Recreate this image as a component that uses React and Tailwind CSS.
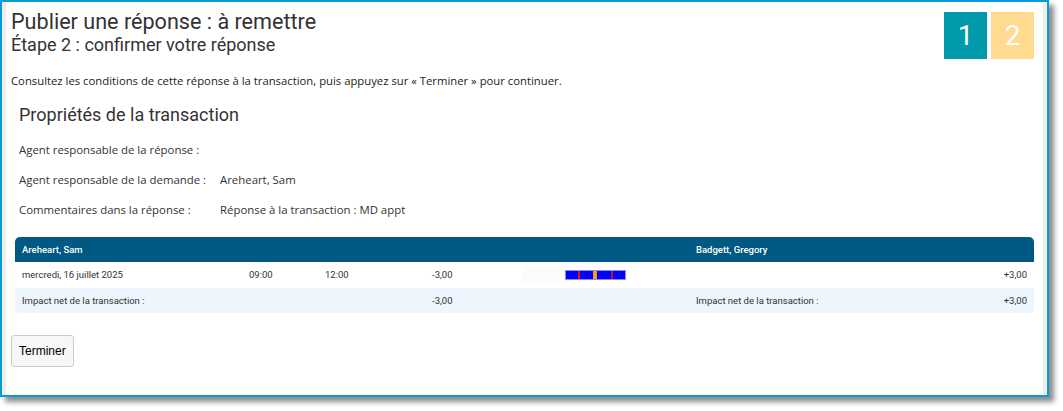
import React from "react";

export default function App() {
  return (
    <div className="w-[1063px] h-[411px] bg-white">
      <div className="w-[1049px] h-[397px] border-[2px] border-[#0a9ad8] bg-white shadow-[5px_5px_5px_rgba(0,0,0,0.45)] flex">
        <div className="w-[4px] bg-[#eeeeee]" />
        <div className="flex-1 flex flex-col px-[5px] text-[#333]" style={{ fontFamily: "Roboto, 'Open Sans', sans-serif" }}>
          <div className="flex justify-between items-start">
            <div className="pt-[7px]">
              <div className="text-[21.6px] leading-[26px] text-[#333]" style={{ fontFamily: "Roboto, sans-serif" }}>Publier une réponse : à remettre</div>
              <div className="text-[18px] leading-[20px] text-[#333]" style={{ fontFamily: "Roboto, sans-serif" }}>Étape 2 : confirmer votre réponse</div>
            </div>
            <div className="flex gap-[4px] mt-[10px] mr-[4px]">
              <div className="w-[43px] h-[47px] bg-[#009aab] text-white flex items-center justify-center text-[28px]">1</div>
              <div className="w-[43px] h-[47px] bg-[#ffda8f] text-white flex items-center justify-center text-[28px]">2</div>
            </div>
          </div>
          <div className="mt-[15px] text-[11.3px] leading-[14px] text-[#222]" style={{ fontFamily: "'Open Sans', sans-serif" }}>
            Consultez les conditions de cette réponse à la transaction, puis appuyez sur « Terminer » pour continuer.
          </div>
          <div className="pl-[8px] mt-[16px]">
            <div className="text-[18px] leading-[22px] text-[#333]" style={{ fontFamily: "Roboto, sans-serif" }}>Propriétés de la transaction</div>
            <div className="mt-[17px] flex flex-col gap-[16px] text-[11.4px] leading-[14px] text-[#333]" style={{ fontFamily: "'Open Sans', sans-serif" }}>
              <div className="flex"><div className="w-[201px]">Agent responsable de la réponse :</div><div></div></div>
              <div className="flex"><div className="w-[201px]">Agent responsable de la demande :</div><div>Areheart, Sam</div></div>
              <div className="flex"><div className="w-[201px]">Commentaires dans la réponse :</div><div>Réponse à la transaction : MD appt</div></div>
            </div>
          </div>
          <div className="mt-[20px] ml-[4px] mr-[4px] text-[9.5px] leading-[12px]" style={{ fontFamily: "Roboto, sans-serif" }}>
            <div className="h-[25px] bg-[#005983] rounded-t-[5px] text-white font-medium grid grid-cols-[681px_1fr] items-center">
              <div className="pl-[7px]">Areheart, Sam</div>
              <div>Badgett, Gregory</div>
            </div>
            <div className="h-[26px] bg-white grid grid-cols-[234px_76px_107px_90px_174px_1fr] items-center text-[#333]">
              <div className="pl-[7px]">mercredi, 16 juillet 2025</div>
              <div>09:00</div>
              <div>12:00</div>
              <div>-3,00</div>
              <div className="flex items-center h-[20px]">
                <div className="w-[43px] h-[18px] bg-[#fcfcfc]" />
                <svg width="61" height="10" viewBox="0 0 61 10">
                  <rect x="0" y="0" width="61" height="10" fill="#0000ff" />
                  <rect x="0.5" y="0.5" width="60" height="9" fill="none" stroke="#8a8aff" strokeWidth="1" />
                  <rect x="13" y="1" width="2" height="8" fill="#e0101a" />
                  <rect x="28" y="1" width="4" height="8" fill="#ff9a00" />
                  <rect x="46" y="1" width="2" height="8" fill="#c81040" />
                </svg>
              </div>
              <div className="text-right pr-[7px]">+3,00</div>
            </div>
            <div className="h-[25px] bg-[#eef6fd] rounded-b-[5px] grid grid-cols-[234px_76px_107px_90px_174px_1fr] items-center text-[#333]">
              <div className="pl-[7px]">Impact net de la transaction :</div>
              <div></div>
              <div></div>
              <div>-3,00</div>
              <div></div>
              <div className="flex justify-between pr-[7px]"><span>Impact net de la transaction :</span><span>+3,00</span></div>
            </div>
          </div>
          <div className="mt-[22px]">
            <button className="h-[32px] px-[7px] bg-[#f7f7f7] border border-[#cccccc] rounded-[3px] text-[12px] text-black" style={{ fontFamily: "'Liberation Sans', Arial, sans-serif" }}>Terminer</button>
          </div>
        </div>
        <div className="w-[4px] bg-[#eeeeee]" />
      </div>
    </div>
  );
}
